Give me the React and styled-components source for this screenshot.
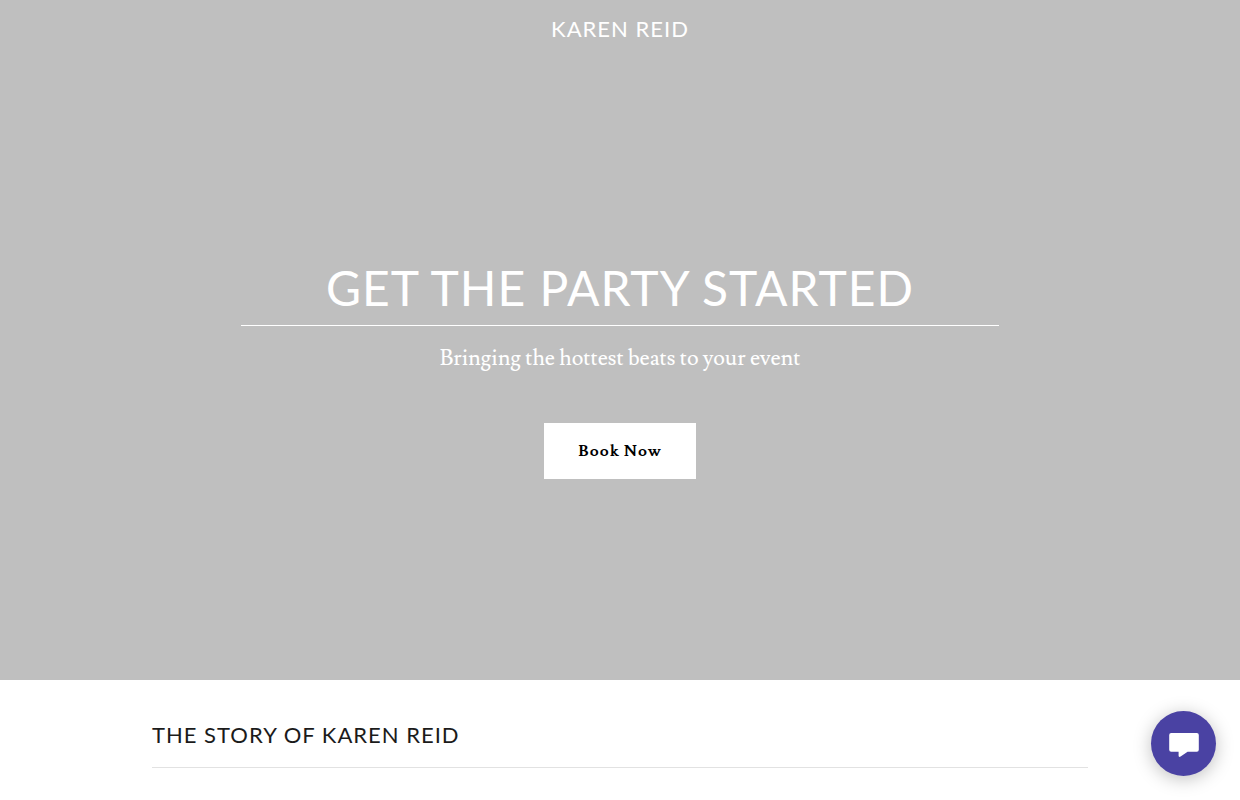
import React from "react";
import styled, { createGlobalStyle } from "styled-components";

const GlobalStyle = createGlobalStyle`
    * {
        box-sizing: border-box;
    }

    body {
        margin: 0;
        background: #fff;
        color: #1b1b1b;
        font-family: Lato, "Open Sans", sans-serif;
        overflow-x: hidden;
    }
`;

const Hero = styled.header`
    display: flex;
    flex-direction: column;
    min-height: 85vh;
    background: #bfbfbf;
    color: #fff;
`;

const Nav = styled.nav`
    display: flex;
    justify-content: center;
    padding: 16px 24px;
`;

const Brand = styled.a`
    color: #fff;
    font-size: 22px;
    line-height: 25px;
    letter-spacing: 1px;
    text-transform: uppercase;
    text-decoration: none;
`;

const HeroContent = styled.div`
    flex: 1;
    display: flex;
    flex-direction: column;
    align-items: center;
    justify-content: center;
    padding: 0 24px;
    text-align: center;
`;

const Headline = styled.h1`
    width: 100%;
    max-width: 758px;
    margin: 0 0 16px;
    padding-bottom: 8px;
    border-bottom: 1px solid #fff;
    font-size: 48px;
    font-weight: 400;
    line-height: 59px;
    letter-spacing: 1px;
    text-transform: uppercase;
`;

const Tagline = styled.p`
    margin: 0 0 48px;
    font-family: Lusitana, "Liberation Serif", serif;
    font-size: 22px;
    line-height: 33px;
`;

const BookButton = styled.button`
    min-width: 152px;
    min-height: 56px;
    padding: 0 32px;
    border: 0;
    background: #fff;
    color: #000;
    font-family: Lusitana, "Liberation Serif", serif;
    font-size: 16px;
    font-weight: 700;
    letter-spacing: 1px;
    cursor: pointer;
`;

const Story = styled.section`
    max-width: 984px;
    margin: 0 auto;
    padding: 40px 24px;
`;

const SectionTitle = styled.h2`
    margin: 0;
    padding-bottom: 18px;
    border-bottom: 1px solid #e2e2e2;
    font-size: 22px;
    font-weight: 400;
    line-height: 29px;
    letter-spacing: 1px;
    text-transform: uppercase;
`;

const ChatButton = styled.button`
    position: fixed;
    right: 24px;
    bottom: 24px;
    display: flex;
    align-items: center;
    justify-content: center;
    width: 65px;
    height: 65px;
    padding: 0;
    border: 0;
    border-radius: 50%;
    background: #4a42a3;
    box-shadow: 0 3px 18px rgba(0, 0, 0, 0.25);
    cursor: pointer;
`;

const ChatIcon = () => (
    <svg width="30" height="26" viewBox="0 0 30 26" fill="#fff" aria-hidden="true">
        <path d="M2.200 2h25.600a2 2 0 0 1 2 2v14.800a2 2 0 0 1-2 2h-9.200l-7 4.800q-2 1-2-.8v-4H2.200a2 2 0 0 1-2-2V4a2 2 0 0 1 2-2z" />
    </svg>
);

const App = () => (
    <>
        <GlobalStyle />
        <Hero>
            <Nav>
                <Brand href="#home">Karen Reid</Brand>
            </Nav>
            <HeroContent>
                <Headline>Get the Party Started</Headline>
                <Tagline>Bringing the hottest beats to your event</Tagline>
                <BookButton type="button">Book Now</BookButton>
            </HeroContent>
        </Hero>
        <Story id="story">
            <SectionTitle>The Story of Karen Reid</SectionTitle>
        </Story>
        <ChatButton type="button" aria-label="Open chat">
            <ChatIcon />
        </ChatButton>
    </>
);

export default App;
